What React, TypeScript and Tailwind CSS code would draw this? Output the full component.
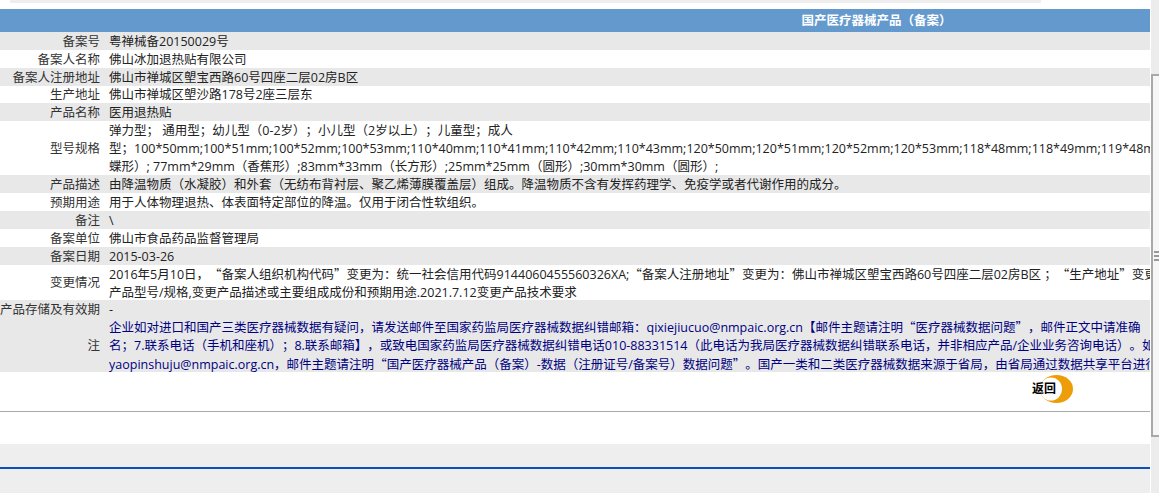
const font = { fontFamily: '"Open Sans", "Noto Sans CJK SC", sans-serif' }

type Row = {
  label: string
  lines: string[]
  gray?: boolean
  navy?: boolean
  height: string
}

const rows: Row[] = [
  { label: '备案号', lines: ['粤禅械备20150029号'], gray: true, height: 'h-[18px]' },
  { label: '备案人名称', lines: ['佛山冰加退热贴有限公司'], height: 'h-[18px]' },
  { label: '备案人注册地址', lines: ['佛山市禅城区塱宝西路60号四座二层02房B区'], gray: true, height: 'h-[18px]' },
  { label: '生产地址', lines: ['佛山市禅城区塱沙路178号2座三层东'], height: 'h-[17px]' },
  { label: '产品名称', lines: ['医用退热贴'], gray: true, height: 'h-[18px]' },
  {
    label: '型号规格',
    lines: [
      '弹力型； 通用型；幼儿型（0-2岁）；小儿型（2岁以上）；儿童型；成人',
      '型；100*50mm;100*51mm;100*52mm;100*53mm;110*40mm;110*41mm;110*42mm;110*43mm;120*50mm;120*51mm;120*52mm;120*53mm;118*48mm;118*49mm;119*48mm',
      '蝶形）; 77mm*29mm（香蕉形）;83mm*33mm（长方形）;25mm*25mm（圆形）;30mm*30mm（圆形）;',
    ],
    height: 'h-[54px]',
  },
  {
    label: '产品描述',
    lines: ['由降温物质（水凝胶）和外套（无纺布背衬层、聚乙烯薄膜覆盖层）组成。降温物质不含有发挥药理学、免疫学或者代谢作用的成分。'],
    gray: true,
    height: 'h-[18px]',
  },
  { label: '预期用途', lines: ['用于人体物理退热、体表面特定部位的降温。仅用于闭合性软组织。'], height: 'h-[18px]' },
  { label: '备注', lines: ['\\'], gray: true, height: 'h-[18px]' },
  { label: '备案单位', lines: ['佛山市食品药品监督管理局'], height: 'h-[18px]' },
  { label: '备案日期', lines: ['2015-03-26'], gray: true, height: 'h-[18px]' },
  {
    label: '变更情况',
    lines: [
      '2016年5月10日，“备案人组织机构代码”变更为：统一社会信用代码9144060455560326XA;“备案人注册地址”变更为：佛山市禅城区塱宝西路60号四座二层02房B区 ；“生产地址”变更为',
      '产品型号/规格,变更产品描述或主要组成成份和预期用途.2021.7.12变更产品技术要求',
    ],
    height: 'h-[35px]',
  },
  { label: '产品存储及有效期', lines: ['-'], gray: true, height: 'h-[18px]' },
  {
    label: '注',
    lines: [
      '企业如对进口和国产三类医疗器械数据有疑问，请发送邮件至国家药监局医疗器械数据纠错邮箱：qixiejiucuo@nmpaic.org.cn【邮件主题请注明“医疗器械数据问题”，邮件正文中请准确',
      '名；7.联系电话（手机和座机）；8.联系邮箱】，或致电国家药监局医疗器械数据纠错电话010-88331514（此电话为我局医疗器械数据纠错联系电话，并非相应产品/企业业务咨询电话）。如',
      'yaopinshuju@nmpaic.org.cn，邮件主题请注明“国产医疗器械产品（备案）-数据（注册证号/备案号）数据问题”。国产一类和二类医疗器械数据来源于省局，由省局通过数据共享平台进行',
    ],
    gray: true,
    navy: true,
    height: 'h-[54px]',
  },
]

// curly quotes are full width in the reference, Open Sans would make them narrow
const Line = ({ text }: { text: string }) => (
  <div>
    {text.split(/([“”])/).map((part, i) =>
      part === '“' || part === '”' ? (
        <span key={i} className="font-['Noto_Sans_CJK_SC']">
          {part}
        </span>
      ) : (
        part
      ),
    )}
  </div>
)

const ReturnButton = () => (
  <div className="relative h-[28px] w-[40px]">
    <svg viewBox="0 0 33 28" className="absolute right-0 top-0 h-[28px] w-[33px]">
      <ellipse cx="16.5" cy="14" rx="16.5" ry="14" fill="#ee9c07" />
      <ellipse cx="11" cy="14" rx="11" ry="11.5" fill="#ffffff" />
    </svg>
    <span className="absolute -left-px top-[5px] text-[12px] font-bold leading-[18px] text-black">返回</span>
  </div>
)

export default function App() {
  return (
    <div className="flex h-[493px] w-[1159px] overflow-hidden bg-white [text-spacing-trim:space-all]" style={font}>
      <main className="flex h-full w-[1150px] flex-col overflow-hidden">
        <div className="h-[9px] shrink-0">
          <div className="ml-[10px] h-[3px] w-[1031px] bg-[#eeeeee]" />
        </div>
        <div className="w-[1750px] shrink-0">
          <div className="flex h-[23px] items-center justify-center bg-[#6499cd] pl-[3px] pt-px text-[12.5px] font-bold text-white">
            国产医疗器械产品（备案）
          </div>
          {rows.map((row) => (
            <div key={row.label} className={`flex ${row.height} ${row.gray ? 'bg-[#e8e8e8]' : 'bg-white'}`}>
              <div className="flex w-[100px] shrink-0 items-center justify-end whitespace-nowrap pt-px text-[12.5px] leading-[18px] text-[#333333]">
                {row.label}
              </div>
              <div className={`ml-[9px] flex flex-col justify-center whitespace-nowrap pt-px text-[12.5px] leading-[18px] ${row.navy ? 'text-[#000080]' : 'text-[#222222]'}`}>
                {row.lines.map((line) => (
                  <Line key={line} text={line} />
                ))}
              </div>
            </div>
          ))}
        </div>
        <div className="flex h-[39px] shrink-0 items-start justify-end pr-[77px] pt-[3px]">
          <ReturnButton />
        </div>
        <div className="h-[33px] shrink-0 border-t border-[#aaaaaa]" />
        <div className="flex-1 bg-[#eeeeee] pt-[23px]">
          <div className="h-[2px] bg-[#0b4fbd]" />
        </div>
      </main>
      <aside className="h-full w-[9px] bg-white pl-px">
        <div className="h-full bg-[#ececec] pt-[74px]">
          <div className="flex h-[363px] flex-col items-end justify-center gap-[2px] border-b-2 border-l-2 border-t-2 border-[#a8a8a8] bg-[#f6f6f6]">
            <div className="h-[2px] w-[5px] bg-[#999999]" />
            <div className="h-[2px] w-[5px] bg-[#999999]" />
            <div className="h-[2px] w-[5px] bg-[#999999]" />
          </div>
        </div>
      </aside>
    </div>
  )
}
